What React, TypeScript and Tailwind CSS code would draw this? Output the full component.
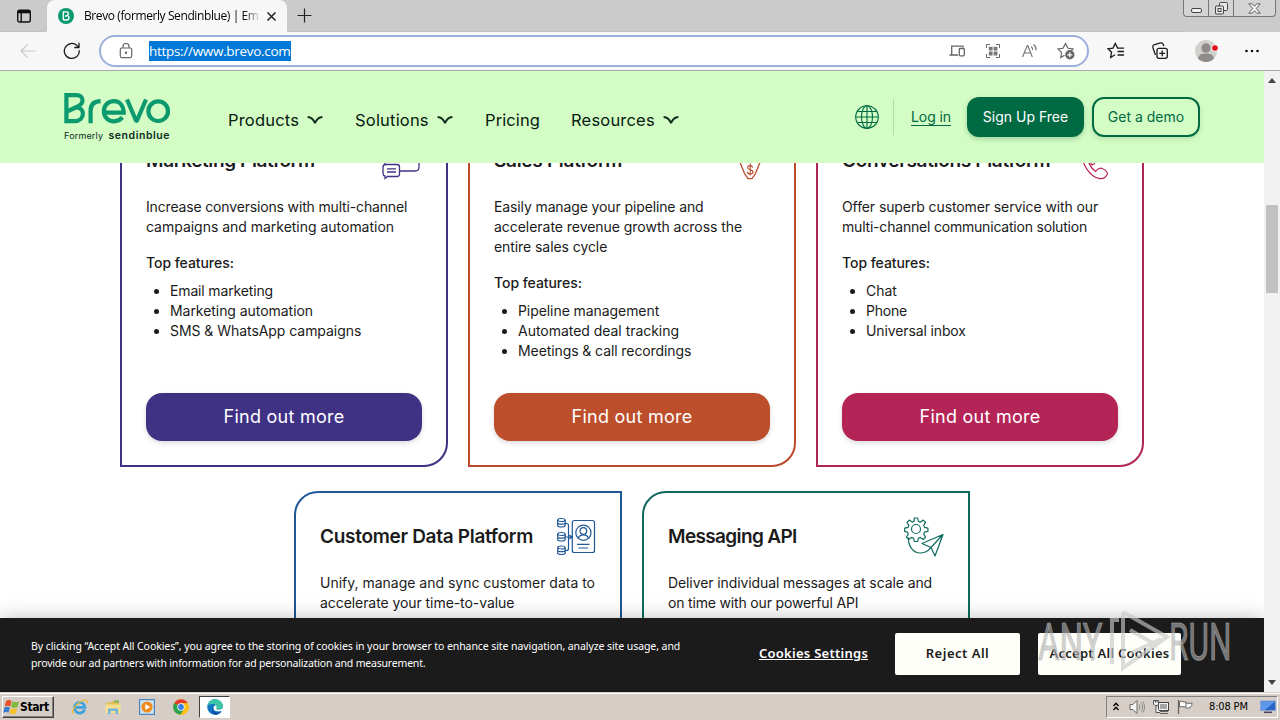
import type { ReactNode } from "react";

function ChevronDown() {
  return (
    <svg className="h-4 w-4" viewBox="0 0 16 16" fill="none" stroke="#0f2f1c" strokeWidth="1.900">
      <path d="M0.6 5 C4 5.200 6.400 7.200 8 11.200 C9.600 7.200 12 5.200 15.400 5" strokeLinejoin="bevel" />
    </svg>
  );
}

function TabBar() {
  return (
    <div className="flex h-8 shrink-0 bg-[#cbcbcb]">
      <div className="flex w-[47px] items-center rounded-br-md border-b border-[#c0c0c0] pl-4">
        <svg className="h-4 w-4" viewBox="0 0 16 16" fill="none" stroke="#111" strokeWidth="1.4">
          <rect x="1.7" y="2.2" width="12.6" height="11.8" rx="2" />
          <path d="M2 4h12" strokeWidth="2.6" />
          <path d="M5.2 4v10" />
        </svg>
      </div>
      <div className="flex w-60 items-center rounded-t-lg bg-[#f7f7f7] pl-[11px]">
        <svg className="h-4 w-4" viewBox="0 0 16 16">
          <circle cx="8" cy="8" r="8" fill="#0b996e" />
          <path d="M5.3 12V3.9h3.1c1.2 0 2 .8 2 1.8s-.7 1.8-2 2.2L7 8.4M8.4 7.7c1.600 0 2.600.8 2.600 2s-1.100 2.300-2.700 2.300h-3" fill="none" stroke="#fff" strokeWidth="1.3" />
        </svg>
        <span className="ml-[10px] w-[174px] overflow-hidden whitespace-nowrap bg-linear-to-r from-black from-90% to-[#ccc] bg-clip-text font-['Open_Sans'] text-[12px] leading-4 tracking-[-0.4px] text-transparent">
          Brevo (formerly Sendinblue) | Em
        </span>
        <svg className="ml-[9px] h-[9px] w-[9px]" viewBox="0 0 9 9" stroke="#222" strokeWidth="1.5">
          <path d="M0.5 0.5l8 8M8.500.5l-8 8" />
        </svg>
      </div>
      <div className="flex flex-1 items-center border-b border-[#c0c0c0] pl-[10px]">
        <svg className="h-[15px] w-[15px]" viewBox="0 0 15 15" stroke="#222" strokeWidth="1.2">
          <path d="M7.500 0.5v14M.5 7.500h14" />
        </svg>
      </div>
      <div className="mr-1 flex h-[17px] w-[93px] rounded-b border border-t-0 border-[#777] bg-[#d4d4d4]">
        <div className="flex w-[25px] items-end justify-center border-r border-[#777] pb-[3px]">
          <div className="h-[5px] w-[11px] rounded-[2px] border border-[#444] bg-[#f2f2f2]" />
        </div>
        <div className="flex w-[25px] items-center justify-center border-r border-[#777]">
          <svg className="h-[13px] w-[13px]" viewBox="0 0 13 13" fill="#e8e8e8" stroke="#444">
            <rect x="4.500" y=".5" width="8" height="8" rx="1" />
            <rect x=".5" y="4" width="8" height="8" rx="1" />
            <rect x="3" y="6.500" width="3" height="3" />
          </svg>
        </div>
        <div className="flex flex-1 items-center justify-center">
          <svg className="h-[11px] w-[13px]" viewBox="0 0 13 11" fill="#f2f2f2" stroke="#555" strokeWidth=".9">
            <path d="M.8.8h3.400L6.500 3.300 8.800.8h3.400L8.300 5.500l3.900 4.700H8.800L6.500 7.700 4.200 10.200H.8l3.900-4.700z" />
          </svg>
        </div>
      </div>
    </div>
  );
}

function AddressBar() {
  return (
    <div className="flex h-[39px] shrink-0 items-center border-b border-[#a9a9a9] bg-[#f7f7f7]">
      <svg className="ml-[20px] h-4 w-4" viewBox="0 0 16 16" fill="none" stroke="#c9c9c9" strokeWidth="1.2">
        <path d="M15.500 8H1M7.500 1.500L1 8l6.500 6.500" />
      </svg>
      <svg className="ml-[27px] h-[18px] w-[18px]" viewBox="0 0 18 18" fill="none" stroke="#1b1b1b" strokeWidth="1.300">
        <path d="M16.300 8.200a7.500 7.500 0 1 1-2.200-4.600L15.800 5.300M16 .8v4.700h-4.700" />
      </svg>
      <div className="ml-[18px] flex h-8 w-[990px] items-center rounded-full border-2 border-[#9cb0dc] bg-white">
        <svg className="ml-[18px] h-4 w-[14px]" viewBox="0 0 14 16" fill="none" stroke="#666" strokeWidth="1.200">
          <rect x="1.300" y="5" width="11.400" height="9.600" rx="1.500" />
          <path d="M4 5V3.500a3 3 0 0 1 6 0V5" />
          <circle cx="7" cy="9.800" r=".6" fill="#666" />
        </svg>
        <span className="ml-[16px] h-5 w-[142px] bg-[#0078d7] font-['Open_Sans'] text-[13.500px] leading-[20px] tracking-[-0.3px] whitespace-nowrap text-white">
          https://www.brevo.com
        </span>
        <div className="ml-auto flex items-center pr-[12px]">
          <svg className="h-4 w-4" viewBox="0 0 16 16" fill="none" stroke="#666" strokeWidth="1.300">
            <path d="M14 4.500V3.200H2.700v8.300M.5 12h8.500" />
            <rect x="10.300" y="5.500" width="5" height="7.300" rx=".8" />
          </svg>
          <svg className="ml-[20px] h-4 w-4" viewBox="0 0 16 16" fill="none" stroke="#666">
            <path d="M1.500 5V1.500H5M11 1.500h3.500V5M14.500 11v3.500H11M5 14.500H1.500V11" strokeWidth="1" />
            <path d="M3.800 3.800h3.800v3.800H3.800zM8.600 3.800h3.800v3.800H8.600zM3.800 8.600h3.800v3.800H3.800zM8.600 8.600h3.800v3.800H8.600z" fill="#777" stroke="none" />
          </svg>
          <svg className="ml-[20px] h-4 w-[17px]" viewBox="0 0 17 16" fill="none" stroke="#777" strokeWidth="1.200">
            <path d="M1.500 14L6.300 2.500h.5L11.300 14M3.200 10h6.500M10.300 3.500c1 1 1.300 2 1.300 3.500M12.500 1.500c2 1.500 2.800 3.500 2.500 5.800" />
          </svg>
          <svg className="ml-[19px] h-[18px] w-[18px]" viewBox="0 0 18 18" fill="none" stroke="#666" strokeWidth="1.200">
            <path d="M7.500 13.300L3.800 15.500l.8-5L1 7l5-.7 2.500-4.800L11 6.300l5 .7-1.500 1.500" />
            <circle cx="12.800" cy="12.800" r="4.700" fill="#666" stroke="none" />
            <path d="M12.800 10.300v5M10.300 12.800h5" stroke="#fff" />
          </svg>
        </div>
      </div>
      <svg className="ml-[18px] h-[18px] w-[18px]" viewBox="0 0 18 18" fill="none" stroke="#1b1b1b" strokeWidth="1.300">
        <path d="M8 12.800l-4.300 2.700.9-5.300L1 6.800l5-.7 2.300-4.600 2.300 4.600h6.500M10.500 9.500h6.500M10.500 13h6.500" />
      </svg>
      <svg className="ml-[26px] h-[18px] w-[18px]" viewBox="0 0 18 18" fill="none" stroke="#1b1b1b" strokeWidth="1.300">
        <rect x="6" y="6.300" width="10.300" height="10" rx="2" />
        <path d="M11.200 8.500v5.700M8.300 11.300H14M4.500 13L2 6c-.6-2 0-3 1.500-3.500l6-1.600c1.500-.3 2.300.2 2.800 1.600l.5 1.500" />
      </svg>
      <svg className="ml-[26px] h-[22px] w-[24px]" viewBox="0 0 24 22">
        <circle cx="11" cy="11" r="11" fill="#d3d1ce" />
        <circle cx="11" cy="8" r="4.700" fill="#8e8b89" />
        <path d="M3 18.500c1-4.500 4-5 8-5s7 .5 8 5a11 11 0 0 1-16 0z" fill="#8e8b89" />
        <circle cx="20" cy="8" r="3.500" fill="#f7f7f7" />
        <circle cx="20" cy="8" r="2.800" fill="#e00b1c" />
      </svg>
      <svg className="ml-[26px] h-1 w-[14px]" viewBox="0 0 14 4" fill="#111">
        <circle cx="1.500" cy="2" r="1.300" />
        <circle cx="7" cy="2" r="1.300" />
        <circle cx="12.500" cy="2" r="1.300" />
      </svg>
    </div>
  );
}

function BrevoLogo() {
  return (
    <svg className="h-[50px] w-[108px]" viewBox="0 0 108 50">
      <g fill="none" stroke="#0b996e" strokeWidth="4.200">
        <path d="M2.400 31.300V3.100h10.300c3.500 0 5.800 2.200 5.800 5.400 0 3.300-2.300 5-5.800 6.500L3 19.500M11.700 15.300c4.500 0 7.200 2.400 7.200 6.300 0 4.400-3.200 7.600-8.500 7.600H2.400" />
        <path d="M26.600 31.300V18.500c0-5.500 3-9 10-9.300" />
        <path d="M41 20.600h18.700c-.3-7-4-11.500-9.700-11.500-6 0-10.100 4.400-10.100 10.100 0 6 4.200 10.100 10.200 10.100 3.300 0 6-1.300 8.300-3.900" />
        <path d="M63 7.500l9.200 21.500h.6L82 7.500" strokeLinejoin="bevel" />
        <circle cx="94.200" cy="19.200" r="9.800" />
      </g>
      <g fill="#0b2b20" fontFamily="Inter">
        <text x="0" y="47.300" fontSize="9" textLength="39">Formerly</text>
        <text x="44.500" y="47.300" fontWeight="600" fontSize="10.500" textLength="61">sendinblue</text>
      </g>
    </svg>
  );
}

function SiteHeader() {
  return (
    <header className="flex h-[92px] shrink-0 items-center bg-[#d3fdc5] px-16 font-[Inter]">
      <BrevoLogo />
      <nav className="ml-[56px] flex items-center pt-[5px] text-[16.500px] leading-6 text-[#07200f]">
        <a className="w-[71px] tracking-[0.18px] whitespace-nowrap">Products</a>
        <span className="ml-[8px]"><ChevronDown /></span>
        <a className="ml-[32px] w-[74px] tracking-[0.2px] whitespace-nowrap">Solutions</a>
        <span className="ml-[8px]"><ChevronDown /></span>
        <a className="ml-[32px] w-[55px] tracking-[0.1px] whitespace-nowrap">Pricing</a>
        <a className="ml-[31px] w-[84px] tracking-[0.2px] whitespace-nowrap">Resources</a>
        <span className="ml-[8px]"><ChevronDown /></span>
      </nav>
      <div className="ml-auto flex items-center text-[14px] text-[#006a43]">
        <svg className="h-6 w-6" viewBox="0 0 24 24" fill="none" stroke="#006a43" strokeWidth="1.100">
          <circle cx="12" cy="12" r="11.300" />
          <ellipse cx="12" cy="12" rx="5.500" ry="11.300" />
          <path d="M12 .7v22.600M.7 12h22.600M2.500 6.500h19M2.500 17.500h19" />
        </svg>
        <div className="ml-[14px] h-9 w-px bg-[#b4dcaa]" />
        <a className="ml-[17px] w-[40px] border-b border-[#006a43] leading-[17px] tracking-[-0.08px] whitespace-nowrap">Log in</a>
        <a className="ml-4 flex h-10 w-[117px] items-center justify-center rounded-xl bg-[#006a43] pb-px text-white shadow-[0_2px_5px_rgba(0,80,40,0.25)]">
          Sign Up Free
        </a>
        <a className="ml-2 flex h-10 w-[108px] items-center justify-center rounded-xl border-2 border-[#006a43] pb-px shadow-[0_2px_5px_rgba(0,80,40,0.15)]">
          Get a demo
        </a>
      </div>
    </header>
  );
}

function ChatIcon() {
  return (
    <svg className="h-10 w-10" viewBox="0 0 40 40" fill="none" stroke="#3f3285" strokeWidth="1.300">
      <path d="M3 24V6a3 3 0 0 1 3-3h28a3 3 0 0 1 3 3v20q0 4-4 4H17" />
      <path d="M4 23.500h11q2.500 0 2.500 2.500v7q0 2.500-2.500 2.500H5.500l-2.500 2v-2.500q-2-.5-2-2.500v-6.500q0-2.500 3-2.500zM5 27.800h9M5 31h9" />
    </svg>
  );
}

function FunnelIcon() {
  return (
    <svg className="h-10 w-10" viewBox="0 0 40 40" fill="none" stroke="#bb4b2c" strokeWidth="1.300">
      <path d="M3 4h34L25.500 32.500 22 37.700h-4L14.500 32.500z" />
      <path d="M22.800 26.500c-.5-1.300-1.300-1.900-2.600-1.900-1.500 0-2.600.8-2.600 2 0 1.300 1 1.700 2.600 2.100 1.700.4 2.800.9 2.800 2.200s-1.200 2.200-2.800 2.200c-1.500 0-2.600-.8-2.900-2.200M20.200 22.500v12" strokeWidth="1.100" />
    </svg>
  );
}

function PhoneIcon() {
  return (
    <svg className="h-10 w-10" viewBox="0 0 40 40" fill="none" stroke="#b82359" strokeWidth="1.200">
      <path d="M3.500 12l5-3 5.500 8-3 5c1 3 3.500 6 6.500 8.500 2-2.500 4-3.700 6-3.200 2.500.8 4.500 2.200 5.700 4.200.8 1.500-.2 3-2.200 4.700-1.500 1.300-3.500 1.800-6 1.200C12.500 36 3.500 23 3.500 12z" />
      <path d="M10.500 19.500c1.500 1.500 2.500 2.500 3.500 4.500l3-1.500" />
    </svg>
  );
}

function DataIcon() {
  return (
    <svg className="h-10 w-10" viewBox="0 0 40 40" fill="none" stroke="#1f5797" strokeWidth="1.200">
      <rect x="16.300" y="3.500" width="22.200" height="32" rx="2" />
      <circle cx="27.400" cy="15.800" r="7.600" />
      <circle cx="27.400" cy="14" r="3.300" />
      <path d="M22.200 21.500c.8-2.500 2.200-3.700 5.200-3.700s4.400 1.200 5.200 3.700M21 27.300h12.500M22.500 31h9.500" />
      <path d="M1.700 3v5.500c0 2 7.500 2 7.500 0V3M1.700 17v5.500c0 2 7.500 2 7.500 0V17M1.700 30.500V36c0 2 7.500 2 7.500 0v-5.500M1.700 5.700c0 2 7.500 2 7.500 0M1.700 19.700c0 2 7.500 2 7.500 0M1.700 33.200c0 2 7.500 2 7.500 0" />
      <ellipse cx="5.450" cy="3" rx="3.750" ry="1.500" />
      <ellipse cx="5.450" cy="17" rx="3.750" ry="1.500" />
      <ellipse cx="5.450" cy="30.500" rx="3.750" ry="1.500" />
      <path d="M9.200 6.500h1.300q2 0 2 2v23q0 2-2 2H9.200M9.200 20H16M13.500 18l2.500 2-2.500 2" />
    </svg>
  );
}

function ApiIcon() {
  return (
    <svg className="h-10 w-10" viewBox="0 0 40 40" fill="none" stroke="#0f6a5e" strokeWidth="1.200" strokeLinejoin="round">
      <circle cx="12" cy="12" r="4.500" />
      <path d="M10.300 1h3.400l.7 3.300 2 .8 2.900-2 2.300 2.400-1.900 2.900.8 2 3.400.7v3.300l-3.400.7-.8 2 1.900 2.900-2.300 2.400-2.900-2-2 .8-.7 3.300h-3.400l-.7-3.300-2-.8-2.900 2-2.300-2.400 1.900-2.900-.8-2L.7 14.400v-3.300l3.400-.7.800-2L3 5.500l2.300-2.400 2.900 2 2-.8z" />
      <path d="M4.500 20.500c-.5 9 5 15.500 11.500 15.500 4.500 0 8-2 10.500-5.200M18 26.500L39 17.500 31 39 27 30.500zM27 30.500L39 17.500" />
    </svg>
  );
}

type Line = { text: string; spacing: string };

type CardProps = {
  title: Line;
  text: Line[];
  features: Line[];
  icon: ReactNode;
  frame: string;
  button: string;
};

function Card({ title, text, features, icon, frame, button }: CardProps) {
  return (
    <article className={`flex h-[352px] w-[328px] flex-col border-2 bg-white p-6 text-[#1b1b1b] ${frame}`}>
      <div className="flex h-10 items-center justify-between">
        <h3 className={`text-[19px] leading-6 font-semibold whitespace-nowrap ${title.spacing}`}>{title.text}</h3>
        {icon}
      </div>
      <p className="mt-4 text-[14px] leading-5 whitespace-nowrap">
        {text.map((line) => (
          <span key={line.text} className={`block ${line.spacing}`}>{line.text}</span>
        ))}
      </p>
      <p className="mt-4 text-[14px] leading-5 font-medium tracking-[-0.05px]">Top features:</p>
      <ul className="mt-2 list-disc pl-6 text-[14px] leading-5">
        {features.map((f) => (
          <li key={f.text} className={f.spacing}>{f.text}</li>
        ))}
      </ul>
      <a className={`mt-auto flex h-12 items-center justify-center rounded-2xl pb-px text-[18px] tracking-[0.25px] text-white shadow-[0_2px_5px_rgba(0,0,0,0.15)] ${button}`}>
        Find out more
      </a>
    </article>
  );
}

function CookieBanner() {
  return (
    <div className="absolute inset-x-0 bottom-0 flex h-[74px] items-center bg-[#1b1b1b] pb-0.5 font-['Noto_Sans'] text-white shadow-[0_0_18px_rgba(0,0,0,0.25)]">
      <div className="ml-[31px] w-[728px] pt-0.5 text-[10.500px] leading-[17px] whitespace-nowrap">
        <p className="tracking-[-0.08px]">
          By clicking “Accept All Cookies”, you agree to the storing of cookies in your browser to enhance site navigation, analyze site usage, and
        </p>
        <p className="tracking-[-0.19px]">provide our ad partners with information for ad personalization and measurement.</p>
      </div>
      <a className="w-[110px] text-[13px] font-semibold tracking-[0.26px] whitespace-nowrap underline">Cookies Settings</a>
      <button className="ml-[26px] h-[42px] w-[125px] rounded-[2px] bg-[#fffffa] text-[13px] font-semibold tracking-[0.5px] text-[#1b1b1b]">Reject All</button>
      <button className="ml-[18px] h-[42px] w-[143px] rounded-[2px] bg-[#fffffa] text-[13px] font-semibold tracking-[0.25px] whitespace-nowrap text-[#1b1b1b]">Accept All Cookies</button>
    </div>
  );
}

function Scrollbar() {
  return (
    <div className="flex w-4 shrink-0 flex-col items-center justify-between bg-[#f1f1f1] py-[7px]">
      <svg className="h-[5px] w-2" viewBox="0 0 8 5" fill="#444"><path d="M0 5l4-5 4 5z" /></svg>
      <div className="mt-auto mb-[387px] h-[88px] w-3 bg-[#c1c1c1]" />
      <svg className="h-[5px] w-2" viewBox="0 0 8 5" fill="#444"><path d="M0 0l4 5 4-5z" /></svg>
    </div>
  );
}

function Watermark() {
  return (
    <svg className="absolute top-[604px] left-[1032px] h-[72px] w-[204px]" viewBox="0 0 204 72">
      <g fill="#b4b4b4" fillOpacity="0.62" stroke="#b4b4b4" strokeOpacity="0.5" strokeWidth="1.200" fontFamily="Roboto" fontSize="52">
        <text transform="translate(6 55.500) scale(.64 1)" textLength="101" lengthAdjust="spacingAndGlyphs">ANY</text>
        <text transform="translate(137 55.500) scale(.6 1)" textLength="104" lengthAdjust="spacingAndGlyphs">RUN</text>
      </g>
      <g fill="none" stroke="#c8c8c8" strokeOpacity="0.65" strokeWidth="4">
        <path d="M91 8L135 33 91 64V8M80 60V16h7M98 26l28 16M99 49l30-14" />
      </g>
    </svg>
  );
}

function WindowsFlag() {
  return (
    <svg className="h-4 w-[17px]" viewBox="0 0 16 15">
      <path d="M3 1.500C5 .5 6.500.8 8 1.800L6.800 7C5 6 3.500 6 1.700 6.800z" fill="#e5502b" />
      <path d="M8.800 2.200c2 1.200 4 1.200 6.200.2l-1.300 5.200c-2 1-4 .8-6-.2z" fill="#7fba3c" />
      <path d="M1.400 7.800c2-.8 3.500-.8 5.100.2L5.200 13c-1.700-1-3.200-1-5 0z" fill="#3b7ed0" />
      <path d="M7.400 8.400c2 1 4 1.100 6 .2l-1.300 5c-2 1-4 .8-6-.2z" fill="#f6c02c" />
    </svg>
  );
}

function Taskbar() {
  return (
    <div className="flex h-7 shrink-0 items-center border-t border-[#d4d0c8] bg-[#d6cec6] shadow-[inset_0_1px_0_#fff]">
      <div className="ml-0.5 flex h-[22px] w-[52px] items-center border border-t-white border-r-[#404040] border-b-[#404040] border-l-white shadow-[inset_-1px_-1px_0_#808080]">
        <WindowsFlag />
        <span className="pt-px font-['DejaVu_Sans_Condensed','DejaVu_Sans'] text-[12px] font-bold tracking-[-0.4px] text-black">Start</span>
      </div>
      <svg className="ml-[17px] h-4 w-[17px]" viewBox="0 0 17 16" fill="none">
        <path d="M13.700 10.500a5.300 5.300 0 1 1 .3-2.200H4" stroke="#3ba3de" strokeWidth="2.700" />
        <path d="M2 14.500C-1 12 9-.5 15.500 1.300c1 .5.800 1.700.2 2.700" stroke="#e9b93a" strokeWidth="1.300" />
      </svg>
      <svg className="ml-[17px] h-4 w-4" viewBox="0 0 16 16">
        <path d="M1 3.500h5l1-1.500h7v12H1z" fill="#e3bd55" />
        <path d="M.5 5.500h15V14H.5z" fill="#f6e08f" />
        <path d="M3 9.500h10V15h-2.500v-3h-5v3H3z" fill="#72b4dc" />
        <path d="M9 1.500h5v2H9z" fill="#74b85c" />
      </svg>
      <svg className="ml-[18px] h-4 w-4" viewBox="0 0 16 16">
        <rect x=".6" y=".6" width="14.800" height="14.800" fill="#cfe3f5" stroke="#4b87bb" strokeWidth="1.200" />
        <circle cx="8" cy="8" r="5.600" fill="#f08a1c" />
        <path d="M6.300 4.900v6.200L11.300 8z" fill="#fff" />
      </svg>
      <svg className="ml-[18px] h-4 w-4" viewBox="0 0 16 16">
        <circle cx="8" cy="8" r="7.800" fill="#fbc116" />
        <path d="M8 8L1.200 4.200A7.800 7.800 0 0 1 14.800 4.200H8z" fill="#e33b2e" />
        <path d="M8 8L1.200 4.100A7.800 7.800 0 0 0 7.500 15.800L11.300 9.900z" fill="#2aa14b" />
        <path d="M8 4.200h6.800A7.800 7.800 0 0 1 7.500 15.800L11.300 9.900z" fill="#fbc116" />
        <circle cx="8" cy="8" r="3.700" fill="#fff" />
        <circle cx="8" cy="8" r="2.900" fill="#3b7ded" />
      </svg>
      <div className="ml-[10px] flex h-[22px] w-[31px] items-center justify-center border border-t-[#404040] border-r-white border-b-white border-l-[#404040] bg-white">
        <svg className="h-4 w-4" viewBox="0 0 16 16">
          <circle cx="8" cy="8" r="7.800" fill="#1277c5" />
          <path d="M.5 6.500C1.500 2.500 4.500.2 8 .2c4.500 0 7.800 3 7.800 6.500 0 2.400-1.800 4-4.200 4-1.800 0-2.700-.7-2.300-1.500C10.200 7 8.500 5 5.700 5 3.300 5 1.500 5.500.5 6.500z" fill="#3cc6a5" />
          <path d="M5.500 10c.5 3.200 3.500 4.500 8.800 2.700C13 14.700 10.500 15.800 8 15.800 4.500 15 3.500 8.500 7 6.700 6 7.500 5.400 8.700 5.500 10z" fill="#0c4f9e" />
          <path d="M9.300 9.200c1-1.500 0-2.700-1-3C6.500 7 6 9 7 10.700c1.500 2 5 2 7.500 1l1.500 1v-4c-.8 1.300-2.300 2-4.200 2-1.800 0-2.900-.7-2.500-1.500z" fill="#fff" />
        </svg>
      </div>
      <div className="mr-0.5 ml-auto flex h-[22px] w-[172px] items-center border border-t-[#808080] border-r-white border-b-white border-l-[#808080] pl-[6px]">
        <svg className="h-[9px] w-[6px]" viewBox="0 0 6 9" fill="none" stroke="#000" strokeWidth="1.300">
          <path d="M.5 4L3 1.300 5.500 4M.5 8L3 5.300 5.500 8" />
        </svg>
        <svg className="ml-[10px] h-4 w-4" viewBox="0 0 16 16" fill="none" stroke="#666">
          <path d="M1 5.500h3l4-4v13l-4-4H1z" fill="#f8f8f8" />
          <path d="M10 5c1 1.500 1 4.500 0 6M12 3.500c2 2.500 2 6.500 0 9M14 2.500c2 3 2 8 0 11" stroke="#8a8a8a" />
        </svg>
        <svg className="ml-2 h-4 w-4" viewBox="0 0 16 16" fill="none" stroke="#555">
          <rect x="5.500" y="3.500" width="10" height="8" fill="#a4a4a4" stroke="#444" />
          <path d="M6.500 4.500h8v6h-8z" stroke="#f5f5f5" />
          <path d="M7 14.500h8M7 12.500h8" stroke="#666" />
          <path d="M.5 1.500h5V5L4 6.500H2L.5 5zM3 6.500v7h4M2.500 1.500v2M4 1.500v2" fill="#f5f5f5" />
        </svg>
        <svg className="ml-2 h-4 w-4" viewBox="0 0 16 16" stroke="#666">
          <path d="M2.500 2.500c3-1 4 1 6.500.500v1c2 .5 4 .5 6 0 0 2-.5 3.500-2 4.500-1.500.8-3 .8-4.500.2v-.7c-2-.5-4-.5-6 0z" fill="#fafafa" />
          <path d="M9 3v5.500" />
          <path d="M1.500 1v14" strokeWidth="1.300" />
        </svg>
        <span className="ml-[16px] w-[40px] pt-px font-['DejaVu_Sans_Condensed','DejaVu_Sans'] text-[11px] tracking-[-0.15px] whitespace-nowrap text-black">8:08 PM</span>
        <svg className="ml-[11px] h-[14px] w-4" viewBox="0 0 16 14">
          <rect x=".5" y="1" width="15" height="9.500" fill="#2a63c4" stroke="#86a5d6" />
          <path d="M1 1.500h14L5 10H1z" fill="#5d98e8" />
          <path d="M4 12.300h8" stroke="#445" strokeWidth="1.500" />
        </svg>
      </div>
    </div>
  );
}

export default function App() {
  return (
    <div className="relative flex h-[720px] w-[1280px] flex-col overflow-hidden bg-white">
      <TabBar />
      <AddressBar />
      <div className="flex min-h-0 flex-1">
        <div className="relative flex w-[1264px] flex-col overflow-hidden">
          <SiteHeader />
          <main className="min-h-0 flex-1 overflow-hidden font-[Inter]">
            <div className="-mt-12 flex flex-col items-center gap-6">
              <div className="flex gap-5">
                <Card
                  title={{ text: "Marketing Platform", spacing: "tracking-[-0.38px]" }}
                  text={[
                    { text: "Increase conversions with multi-channel", spacing: "tracking-[-0.16px]" },
                    { text: "campaigns and marketing automation", spacing: "tracking-[-0.02px]" },
                  ]}
                  features={[
                    { text: "Email marketing", spacing: "tracking-[-0.15px]" },
                    { text: "Marketing automation", spacing: "tracking-[-0.05px]" },
                    { text: "SMS & WhatsApp campaigns", spacing: "tracking-[-0.05px]" },
                  ]}
                  icon={<ChatIcon />}
                  frame="border-[#3f3285] rounded-br-3xl"
                  button="bg-[#3f3285]"
                />
                <Card
                  title={{ text: "Sales Platform", spacing: "tracking-[-0.3px]" }}
                  text={[
                    { text: "Easily manage your pipeline and", spacing: "tracking-[-0.12px]" },
                    { text: "accelerate revenue growth across the", spacing: "tracking-[-0.04px]" },
                    { text: "entire sales cycle", spacing: "tracking-[-0.07px]" },
                  ]}
                  features={[
                    { text: "Pipeline management", spacing: "tracking-[-0.07px]" },
                    { text: "Automated deal tracking", spacing: "tracking-[-0.03px]" },
                    { text: "Meetings & call recordings", spacing: "tracking-[-0.09px]" },
                  ]}
                  icon={<FunnelIcon />}
                  frame="border-[#bb4b2c] rounded-br-3xl"
                  button="bg-[#bd4e2b]"
                />
                <Card
                  title={{ text: "Conversations Platform", spacing: "tracking-[-0.33px]" }}
                  text={[
                    { text: "Offer superb customer service with our", spacing: "tracking-[-0.1px]" },
                    { text: "multi-channel communication solution", spacing: "tracking-[-0.2px]" },
                  ]}
                  features={[
                    { text: "Chat", spacing: "tracking-[0px]" },
                    { text: "Phone", spacing: "tracking-[-0.2px]" },
                    { text: "Universal inbox", spacing: "tracking-[-0.12px]" },
                  ]}
                  icon={<PhoneIcon />}
                  frame="border-[#b02558] rounded-br-3xl"
                  button="bg-[#b52457]"
                />
              </div>
              <div className="flex gap-5">
                <Card
                  title={{ text: "Customer Data Platform", spacing: "tracking-[-0.3px]" }}
                  text={[
                    { text: "Unify, manage and sync customer data to", spacing: "tracking-[-0.01px]" },
                    { text: "accelerate your time-to-value", spacing: "tracking-[-0.07px]" },
                  ]}
                  features={[]}
                  icon={<DataIcon />}
                  frame="border-[#1f5797] rounded-tl-3xl"
                  button="bg-[#1f5797]"
                />
                <Card
                  title={{ text: "Messaging API", spacing: "tracking-[-0.64px]" }}
                  text={[
                    { text: "Deliver individual messages at scale and", spacing: "tracking-[-0.1px]" },
                    { text: "on time with our powerful API", spacing: "tracking-[-0.17px]" },
                  ]}
                  features={[]}
                  icon={<ApiIcon />}
                  frame="border-[#0f6a5e] rounded-tl-3xl"
                  button="bg-[#0f6a5e]"
                />
              </div>
            </div>
          </main>
          <CookieBanner />
        </div>
        <Scrollbar />
      </div>
      <Taskbar />
      <Watermark />
    </div>
  );
}
